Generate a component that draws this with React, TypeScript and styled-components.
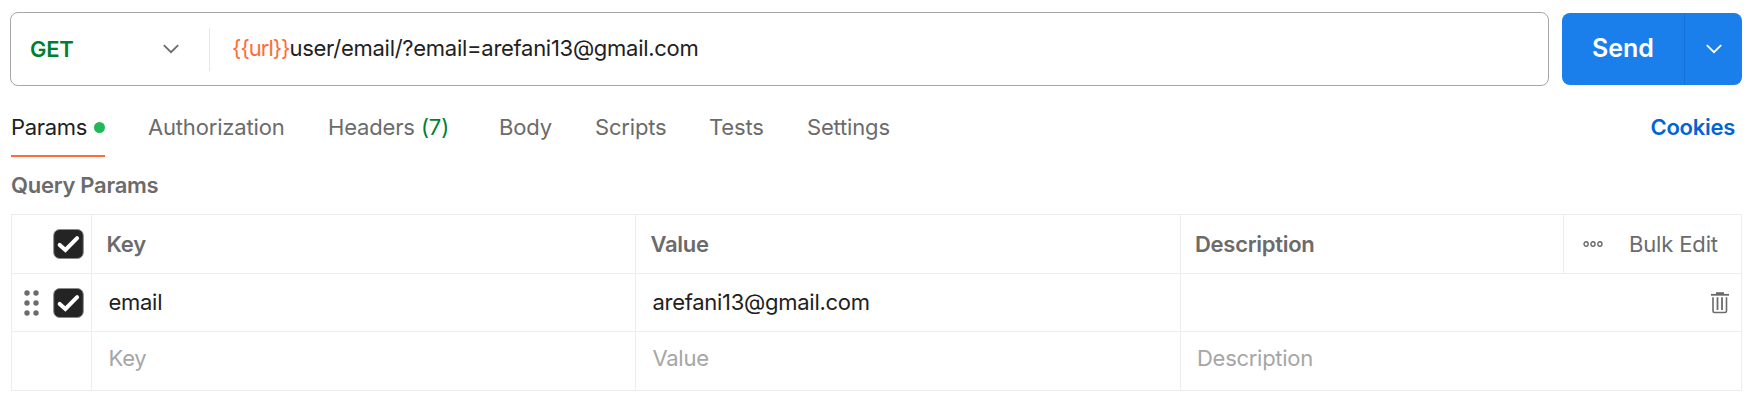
import React from "react";
import styled, { createGlobalStyle } from "styled-components";

const GlobalStyle = createGlobalStyle`
  * { box-sizing: border-box; }
  body {
    margin: 0;
    background: #fff;
    color: #212121;
    font-family: Inter, "Liberation Sans", sans-serif;
    font-size: 22px;
    line-height: 28px;
    letter-spacing: -0.28px;
  }
  button { font: inherit; letter-spacing: inherit; border: 0; padding: 0; margin: 0; background: none; color: inherit; }
`;

const line = "#ededed";

const Page = styled.main`
  width: 1754px;
  height: 402px;
  padding: 12px 12px 0 10px;
  overflow: hidden;
`;

const RequestBar = styled.div`
  display: flex;
  align-items: center;
  gap: 13px;
  height: 74px;
`;

const UrlBox = styled.div`
  display: flex;
  align-items: center;
  width: 1539px;
  height: 74px;
  border: 1px solid #a6a6a6;
  border-radius: 8px;
`;

const MethodSelect = styled.button`
  display: flex;
  align-items: center;
  justify-content: space-between;
  width: 199px;
  height: 43px;
  padding: 0 30.5px 0 19px;
  border-right: 1px solid #e6e6e6;
  color: #007f31;
  font-weight: 600;
`;

const UrlText = styled.div`
  padding: 0 0 2px 22px;
  white-space: nowrap;
`;

const Variable = styled.span`
  color: #ff6c37;
  letter-spacing: -1px;
`;

const SendGroup = styled.div`
  display: flex;
  width: 180px;
  height: 72px;
  border-radius: 8px;
  overflow: hidden;
  background: #1a7eeb;
  color: #fff;
`;

const SendButton = styled.button`
  width: 123px;
  border-right: 1px solid #1672d6;
  font-size: 25px;
  font-weight: 600;
  letter-spacing: 0;
  padding-bottom: 2px;
`;

const SendMenu = styled.button`
  display: flex;
  flex: 1;
  align-items: center;
  justify-content: center;
`;

const TabBar = styled.nav`
  display: flex;
  align-items: flex-start;
  height: 71px;
  padding: 27px 7px 0 1px;
`;

const Tab = styled.button<{ $active?: boolean; $gap: number; $width: number }>`
  display: flex;
  align-items: center;
  justify-content: space-between;
  width: ${(p) => p.$width}px;
  height: 44px;
  margin-right: ${(p) => p.$gap}px;
  padding-bottom: 14px;
  border-bottom: 2px solid ${(p) => (p.$active ? "#ff6c37" : "transparent")};
  color: ${(p) => (p.$active ? "#212121" : "#6b6b6b")};
  letter-spacing: ${(p) => (p.$active ? -0.3 : -0.17)}px;
  white-space: nowrap;
`;

const Count = styled.span`
  color: #007f31;
`;

const Dot = styled.span`
  width: 11px;
  height: 11px;
  border-radius: 50%;
  background: #20b958;
`;

const CookiesLink = styled.a`
  margin-left: auto;
  color: #0265d2;
  font-weight: 600;
`;

const SectionTitle = styled.h2`
  height: 57px;
  margin: 0;
  padding: 14px 0 0 1px;
  color: #6b6b6b;
  font-size: 22px;
  font-weight: 600;
`;

const Table = styled.div`
  width: 1731px;
  margin-left: 1px;
  border: 1px solid ${line};
  border-bottom: 0;
`;

const Row = styled.div<{ $height: number }>`
  display: grid;
  grid-template-columns: 79px 544px 545px 1fr;
  height: ${(p) => p.$height}px;
  border-bottom: 1px solid ${line};
`;

const Cell = styled.div<{ $tone?: "head" | "hint"; $lift?: number }>`
  display: flex;
  align-items: center;
  padding: 0 0 ${(p) => p.$lift ?? 0}px ${(p) => (p.$tone === "head" ? 14.5 : 16.5)}px;
  border-left: 1px solid ${line};
  color: ${(p) => (p.$tone === "head" ? "#6b6b6b" : p.$tone === "hint" ? "#a6a6a6" : "#212121")};
  font-weight: ${(p) => (p.$tone === "head" ? 600 : 400)};
`;

const ControlCell = styled.div`
  display: flex;
  align-items: center;
  justify-content: flex-end;
  gap: 14px;
  padding-right: 7px;
`;

const DescriptionCell = styled(Cell)`
  justify-content: space-between;
  padding-left: ${(p) => (p.$tone === "head" ? 14 : 16)}px;
`;

const TableActions = styled.div`
  display: flex;
  align-items: center;
  align-self: stretch;
  width: 178px;
  padding-left: 19px;
  border-left: 1px solid ${line};
  gap: 26px;
  color: #6b6b6b;
  font-weight: 400;
  letter-spacing: -0.15px;
`;

const RemoveButton = styled.button`
  display: flex;
  margin-right: 12px;
`;

const Chevron = ({ color }: { color: string }) => (
  <svg width="16" height="10" viewBox="0 0 16 10" fill="none">
    <path d="M.8 1.1 8 8.2 15.2 1.1" stroke={color} strokeWidth="1.8" />
  </svg>
);

const Checkbox = () => (
  <svg width="31" height="30" viewBox="0 0 31 30" fill="none">
    <rect x=".7" y=".5" width="29.6" height="29" rx="6" fill="#242424" stroke="#8a8a8a" />
    <path d="M6.7 15.9 12.4 21 24.1 9.1" stroke="#fff" strokeWidth="4" strokeLinecap="round" />
  </svg>
);

const DragHandle = () => (
  <svg width="15" height="26" viewBox="0 0 15 26" fill="#6b6b6b">
    {[3, 13, 23].map((y) => (
      <React.Fragment key={y}>
        <circle cx="3" cy={y} r="2.7" />
        <circle cx="12" cy={y} r="2.7" />
      </React.Fragment>
    ))}
  </svg>
);

const MoreIcon = () => (
  <svg width="20" height="6" viewBox="0 0 20 6" fill="none" stroke="#6b6b6b" strokeWidth="1.4">
    <ellipse cx="3.1" cy="3" rx="2.1" ry="2.2" />
    <ellipse cx="10" cy="3" rx="2.1" ry="2.2" />
    <ellipse cx="16.9" cy="3" rx="2.1" ry="2.2" />
  </svg>
);

const TrashIcon = () => (
  <svg width="18" height="22" viewBox="0 0 18 22" fill="none" stroke="#6b6b6b" strokeWidth="1.6">
    <path d="M5 1.2h8" strokeWidth="2" />
    <path d="M0 2.8h18" strokeWidth="1.8" />
    <path d="M2 5.2V19Q2 20.5 3.5 20.5H14Q15.5 20.5 15.5 19V5.2" />
    <path d="M6.5 5.2V18M11 5.2V18" strokeWidth="1.8" />
  </svg>
);

const tabs = [
  { label: "Authorization", width: 136, gap: 44 },
  { label: "Headers", count: "(7)", width: 121, gap: 50 },
  { label: "Body", width: 52, gap: 44 },
  { label: "Scripts", width: 71, gap: 43 },
  { label: "Tests", width: 55, gap: 43 },
  { label: "Settings", width: 84, gap: 0 },
];

export default function App() {
  return (
    <Page>
      <GlobalStyle />
      <RequestBar>
        <UrlBox>
          <MethodSelect>
            GET
            <Chevron color="#6b6b6b" />
          </MethodSelect>
          <UrlText>
            <Variable>{"{{url}}"}</Variable>user/email/?email=arefani13@gmail.com
          </UrlText>
        </UrlBox>
        <SendGroup>
          <SendButton>Send</SendButton>
          <SendMenu>
            <Chevron color="#fff" />
          </SendMenu>
        </SendGroup>
      </RequestBar>
      <TabBar>
        <Tab $active $width={94} $gap={43}>
          Params
          <Dot />
        </Tab>
        {tabs.map((tab) => (
          <Tab key={tab.label} $width={tab.width} $gap={tab.gap}>
            {tab.label}
            {tab.count && <Count>{tab.count}</Count>}
          </Tab>
        ))}
        <CookiesLink>Cookies</CookiesLink>
      </TabBar>
      <SectionTitle>Query Params</SectionTitle>
      <Table>
        <Row $height={59}>
          <ControlCell>
            <Checkbox />
          </ControlCell>
          <Cell $tone="head">Key</Cell>
          <Cell $tone="head">Value</Cell>
          <DescriptionCell $tone="head">
            Description
            <TableActions>
              <MoreIcon />
              Bulk Edit
            </TableActions>
          </DescriptionCell>
        </Row>
        <Row $height={58}>
          <ControlCell>
            <DragHandle />
            <Checkbox />
          </ControlCell>
          <Cell $lift={1}>email</Cell>
          <Cell $lift={1}>arefani13@gmail.com</Cell>
          <DescriptionCell>
            <span />
            <RemoveButton aria-label="Remove">
              <TrashIcon />
            </RemoveButton>
          </DescriptionCell>
        </Row>
        <Row $height={59}>
          <ControlCell />
          <Cell $tone="hint" $lift={6}>Key</Cell>
          <Cell $tone="hint" $lift={6}>Value</Cell>
          <DescriptionCell $tone="hint" $lift={6}>Description</DescriptionCell>
        </Row>
      </Table>
    </Page>
  );
}
